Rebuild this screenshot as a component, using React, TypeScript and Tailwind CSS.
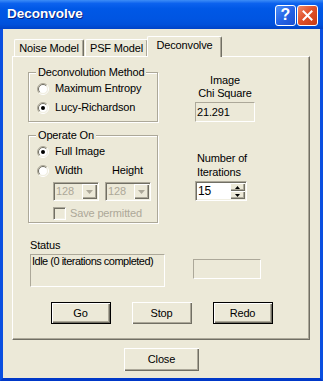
import type { ReactNode } from "react"

const face = "bg-[#ECE9D8]"
const sunken = "border border-t-[#ACA899] border-l-[#ACA899] border-b-white border-r-white"
const sunken2 = "border border-t-[#ACA899] border-l-[#ACA899] border-b-white border-r-white shadow-[inset_1px_1px_0_#716F64,inset_-1px_-1px_0_#F1EFE2]"
const raised = "shadow-[inset_1px_1px_0_#fff,inset_-1px_-1px_0_#716F64,inset_-2px_-2px_0_#ACA899]"

function Radio({ checked }: { checked?: boolean }) {
    return (
        <svg width="12" height="12" viewBox="0 0 12 12" className="shrink-0">
            <circle cx="6" cy="6" r="4.5" fill="#fff" />
            <path d="M2.1 9.9A5.5 5.5 0 0 1 9.9 2.1" fill="none" stroke="#ACA899" />
            <path d="M9.9 2.1A5.5 5.5 0 0 1 2.1 9.9" fill="none" stroke="#fff" />
            <path d="M2.8 9.2A4.5 4.5 0 0 1 9.2 2.8" fill="none" stroke="#716F64" />
            <path d="M9.2 2.8A4.5 4.5 0 0 1 2.8 9.2" fill="none" stroke="#F1EFE2" />
            {checked && <circle cx="6" cy="6" r="2" fill="#000" />}
        </svg>
    )
}

function Group({ title, children, className }: { title: string; children: ReactNode; className?: string }) {
    return (
        <div className={`relative w-[130px] border border-[#ACA899] shadow-[inset_1px_1px_0_#fff,1px_1px_0_#fff] ${className ?? ""}`}>
            <span className={`absolute left-[7px] -top-[7px] px-[2px] leading-[13px] ${face}`}>{title}</span>
            {children}
        </div>
    )
}

function Combo() {
    return (
        <div className={`w-[46px] h-[19px] flex ${sunken2} ${face}`}>
            <span className="flex-1 pl-[2px] pt-[1px] leading-[15px] text-[#ACA899]">128</span>
            <div className={`w-[15px] m-[1px] flex items-center justify-center ${raised}`}>
                <svg width="7" height="4" viewBox="0 0 7 4">
                    <path d="M0 0h7L3.5 4z" fill="#ACA899" />
                </svg>
            </div>
        </div>
    )
}

function Btn({ label, primary, w = "w-[60px]", h = "h-[22px]" }: { label: string; primary?: boolean; w?: string; h?: string }) {
    return (
        <div
            className={`${w} ${h} flex items-center justify-center ${face} ${
                primary
                    ? "border border-black shadow-[inset_1px_1px_0_#fff,inset_-1px_-1px_0_#716F64,inset_-2px_-2px_0_#ACA899]"
                    : raised
            }`}
        >
            {label}
        </div>
    )
}

function Tab({ label, active, w }: { label: string; active?: boolean; w: string }) {
    return (
        <div
            className={`${w} flex items-center justify-center rounded-t-[2px] border-t border-l border-white shadow-[inset_-1px_0_0_#ACA899] border-r border-r-[#716F64] ${face} ${
                active ? "h-[21px] -ml-[1px] relative z-10 pb-[3px]" : "h-[18px]"
            }`}
        >
            {label}
        </div>
    )
}

export default function App() {
    return (
        <div className="w-[323px] h-[381px] flex flex-col [font-family:'Liberation_Sans',Arial,sans-serif] text-[11px] tracking-[-0.15px] text-black select-none">
            {/* title bar */}
            <div className="h-[29px] shrink-0 flex items-center pl-[7px] pr-[5px] bg-[linear-gradient(180deg,#3D8DF7_0%,#0C62EE_12%,#0058E6_30%,#0055E2_65%,#0050DA_85%,#0042C6_100%)]">
                <span className="flex-1 text-white font-bold text-[13.5px] tracking-normal [text-shadow:1px_1px_0_#0A2080]">Deconvolve</span>
                <div className="flex gap-[1px] pt-[1px]">
                    <div className="w-[21px] h-[21px] rounded-[3px] border border-white bg-[linear-gradient(135deg,#4D8FF8_0%,#2463E6_50%,#1A4FD0_100%)] flex items-center justify-center text-white font-bold text-[16px] leading-none tracking-normal">
                        ?
                    </div>
                    <div className="w-[21px] h-[21px] rounded-[3px] border border-white bg-[linear-gradient(135deg,#EF8A6A_0%,#E1522B_45%,#C83A12_100%)] flex items-center justify-center">
                        <svg width="11" height="11" viewBox="0 0 11 11">
                            <path d="M1.5 1.5l8 8M9.5 1.5l-8 8" stroke="#fff" strokeWidth="2" strokeLinecap="square" />
                        </svg>
                    </div>
                </div>
            </div>

            {/* client area */}
            <div className={`flex-1 flex flex-col ${face} border-x-[3px] border-b-[3px] border-x-[#0A4FE0] border-b-[#0038C8] pl-[9px] pt-[7px]`}>
                <div className="h-[21px] -mb-[1px] flex items-end pl-[2px]">
                    <Tab label="Noise Model" w="w-[70px]" />
                    <div className="w-[1px]" />
                    <Tab label="PSF Model" w="w-[63px]" />
                    <Tab label="Deconvolve" active w="w-[75px]" />
                </div>

                <div className="w-[298px] h-[284px] flex flex-col border-t border-l border-white border-r border-b border-r-[#716F64] border-b-[#716F64] shadow-[inset_-1px_-1px_0_#ACA899]">
                    <div className="flex pl-[15px]">
                        {/* left column */}
                        <div className="w-[137px] flex flex-col pt-[15px]">
                            <Group title="Deconvolution Method" className="pt-[6px] pb-[4px]">
                                <div className="h-[19px] flex items-center gap-[6px] pl-[8px]">
                                    <Radio />
                                    <span>Maximum Entropy</span>
                                </div>
                                <div className="h-[19px] flex items-center gap-[6px] pl-[8px]">
                                    <Radio checked />
                                    <span>Lucy-Richardson</span>
                                </div>
                            </Group>

                            <Group title="Operate On" className="mt-[13px] pt-[6px] pb-[2px]">
                                <div className="h-[19px] flex items-center gap-[6px] pl-[8px]">
                                    <Radio checked />
                                    <span>Full Image</span>
                                </div>
                                <div className="h-[19px] flex items-center gap-[6px] pl-[8px]">
                                    <Radio />
                                    <span className="w-[51px]">Width</span>
                                    <span>Height</span>
                                </div>
                                <div className="mt-[2px] flex gap-[6px] pl-[24px]">
                                    <Combo />
                                    <Combo />
                                </div>
                                <div className="mt-[6px] h-[13px] flex items-center gap-[4px] pl-[24px] text-[#ACA899]">
                                    <div className={`w-[13px] h-[13px] ${sunken2} ${face}`} />
                                    <span>Save permitted</span>
                                </div>
                            </Group>

                            <div className="mt-[15px] ml-[2px] leading-[14px]">Status</div>
                            <div className={`mt-[2px] ml-[2px] w-[135px] h-[33px] ${sunken} leading-[13px] pl-[1px] tracking-[-0.5px]`}>
                                Idle (0 iterations completed)
                            </div>
                        </div>

                        {/* right column */}
                        <div className="ml-[28px] w-[70px] flex flex-col pt-[17px]">
                            <div className="w-[64px] flex flex-col items-center leading-[13px]">
                                <span>Image</span>
                                <span>Chi Square</span>
                                <div className={`mt-[2px] w-[60px] h-[20px] ${sunken} pl-[1px] leading-[18px] self-center`}>21.291</div>
                            </div>
                            <div className="mt-[29px] ml-[4px] leading-[14px]">
                                Number of
                                <br />
                                Iterations
                            </div>
                            <div className={`mt-[2px] ml-[2px] w-[52px] h-[20px] flex bg-white ${sunken2}`}>
                                <span className="flex-1 pl-[2px] leading-[18px] text-[12px]">15</span>
                                <div className="w-[16px] flex flex-col py-[1px] pr-[1px]">
                                    <div className={`flex-1 flex items-center justify-center ${face} ${raised}`}>
                                        <svg width="5" height="3" viewBox="0 0 5 3">
                                            <path d="M2.5 0L5 3H0z" fill="#000" />
                                        </svg>
                                    </div>
                                    <div className={`flex-1 flex items-center justify-center ${face} ${raised}`}>
                                        <svg width="5" height="3" viewBox="0 0 5 3">
                                            <path d="M0 0h5L2.5 3z" fill="#000" />
                                        </svg>
                                    </div>
                                </div>
                            </div>
                            <div className={`mt-[58px] w-[68px] h-[20px] ${sunken}`} />
                        </div>
                    </div>

                    <div className="mt-[15px] flex justify-center gap-[21px] pl-[1px]">
                        <Btn label="Go" primary />
                        <Btn label="Stop" />
                        <Btn label="Redo" primary />
                    </div>
                </div>

                <div className="mt-[8px] flex justify-center pr-[9px]">
                    <Btn label="Close" w="w-[75px]" h="h-[23px]" />
                </div>
            </div>
        </div>
    )
}
